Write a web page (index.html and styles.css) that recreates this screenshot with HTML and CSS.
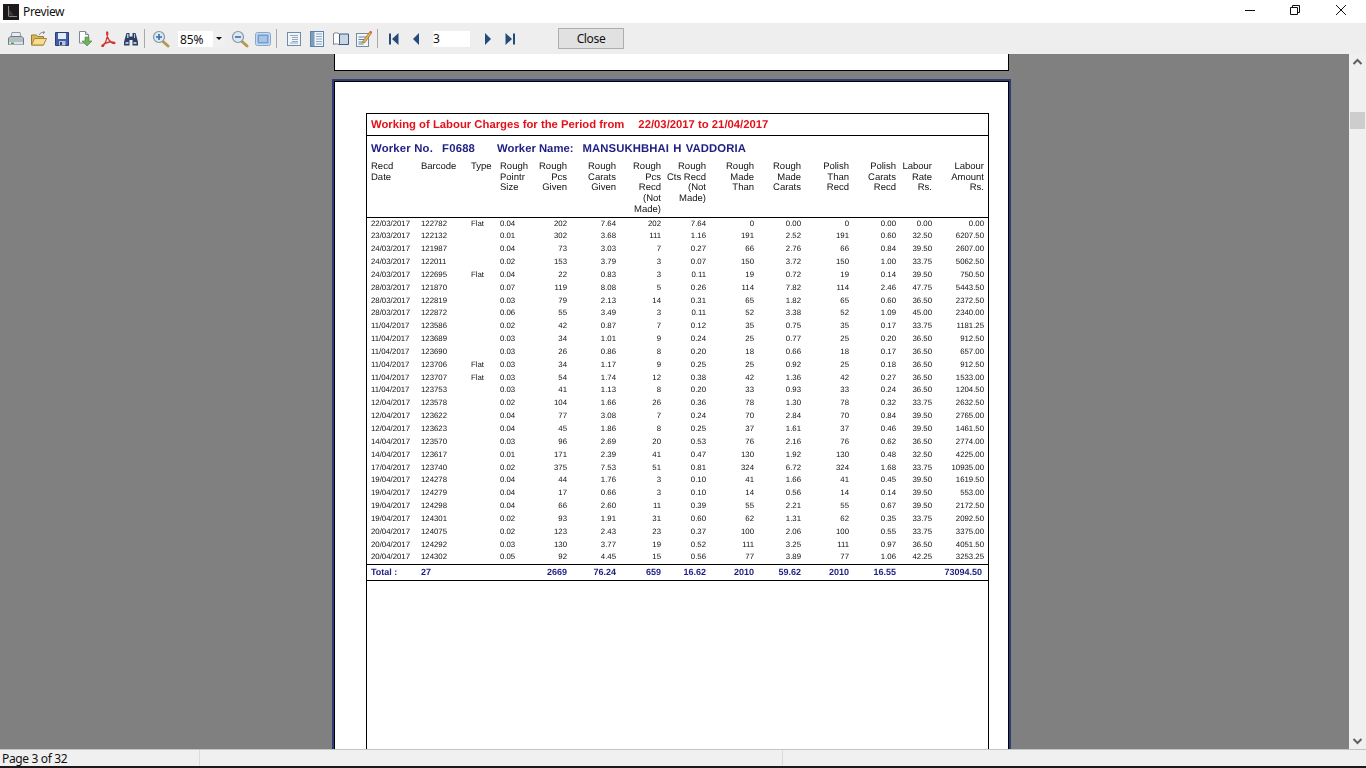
FILE: index.html
```html
<!DOCTYPE html>
<html lang="en">
<head>
    <meta charset="UTF-8">
    <title>Preview</title>
    <link rel="stylesheet" href="styles.css">
</head>
<body>
    <div class="window">
        <div class="titlebar">
            <svg class="app-icon" width="16" height="16" viewBox="0 0 16 16"><rect width="16" height="16" fill="#1c1a1a"/><path d="M5.500 2v10M5.500 12.500H14" stroke="#8f8a84" fill="none"/><path d="M6 5v6.500h5z" fill="#3d3a37"/></svg>
            <span class="title">Preview</span>
            <div class="win-btns">
                <svg class="win-btn" width="46" height="20" viewBox="0 0 46 20"><path d="M19 10.500h10" stroke="#111" fill="none"/></svg>
                <svg class="win-btn" width="46" height="20" viewBox="0 0 46 20"><path d="M18.500 7.500h7v7h-7zM20.500 7.500v-2h7v7h-2" stroke="#111" fill="none"/></svg>
                <svg class="win-btn" width="46" height="20" viewBox="0 0 46 20"><path d="M18 5l10 10M28 5L18 15" stroke="#111" fill="none"/></svg>
            </div>
        </div>

        <div class="toolbar">
            <button class="tool"><svg width="16" height="16" viewBox="0 0 16 16"><path d="M4 1.500h8l1 5H3z" fill="#e8ecf0" stroke="#8d99a4"/><path d="M.5 7l2-1.500h11l2 1.500v6.500H.5z" fill="#b5bdc5" stroke="#6f7b86"/><path d="M1 11h14v2.500H1z" fill="#dde1e5"/><path d="M3 11.500h3v1.500H3z" fill="#37b24a"/></svg></button>
            <button class="tool"><svg width="18" height="16" viewBox="0 0 18 16"><path d="M1.500 14V4h5l1 1.500h6V14z" fill="#d9b75e" stroke="#9c7a2c"/><path d="M1.500 14l3-6.500h12l-3 6.500z" fill="#f4dd8f" stroke="#a98732"/><path d="M9 4c1-2 3-3 5.500-2.500l-1-1.500M14.500 1.500L13 3" stroke="#7d8a96" fill="none"/></svg></button>
            <button class="tool"><svg width="16" height="16" viewBox="0 0 16 16"><path d="M1.500 1.500h13v13h-13z" fill="#3f5fa8" stroke="#2a3f78"/><path d="M4 2h8v6H4z" fill="#e6ecf5"/><path d="M5 10h6.500v4.500H5z" fill="#bcc4d2"/><path d="M6 11h2v3H6z" fill="#2a3f78"/></svg></button>
            <button class="tool"><svg width="16" height="17" viewBox="0 0 16 17"><path d="M2.500 1.500h6l3 3V13h-9z" fill="#fff" stroke="#7d8a96"/><path d="M8.500 1.500v3h3" fill="#dfe5ea" stroke="#7d8a96"/><path d="M8 7h4v4h3l-5 5-5-5h3z" fill="#6fb05c" stroke="#3f8a34" stroke-width=".6"/></svg></button>
            <button class="tool"><svg width="16" height="16" viewBox="0 0 16 16"><path d="M7 1c-1 1 .5 5 2 8 1.500 2 4 3.500 5.500 3.500 1.500-.5-.5-2-5-1.500-3 .500-6 2-7.500 3.500-.5 1 .5 1.500 1.500.5C5 12.500 7.500 6 7.800 2.500 7.800 1.500 7.500 1 7 1z" fill="none" stroke="#d3322c" stroke-width="1.300"/></svg></button>
            <button class="tool"><svg width="16" height="16" viewBox="0 0 16 16"><path d="M3.500 2h3v3.500h3V2h3l2.500 9v3.500h-5.500V9h-3v5.500H1V11z" fill="#2d3f66"/><path d="M2.500 11h3v2h-3zM10.500 11h3v2h-3zM4 3h1.500v4H4zM11 3h1v4h-1z" fill="#b4c6de"/></svg></button>
            <span class="sep sep-a"></span>
            <button class="tool zoom-in"><svg width="18" height="18" viewBox="0 0 18 18"><path d="M10.500 11l5.500 5" stroke="#b39a52" stroke-width="3" stroke-linecap="round"/><circle cx="7" cy="7" r="5.500" fill="#dbe8f3" stroke="#8395a5" stroke-width="1.200"/><path d="M4 7h6M7 4v6" stroke="#3b6ea5" stroke-width="1.600"/></svg></button>
            <div class="combo"><span class="combo-text">85%</span><span class="combo-arrow"></span></div>
            <button class="tool zoom-out"><svg width="18" height="18" viewBox="0 0 18 18"><path d="M10.500 11l5.500 5" stroke="#b39a52" stroke-width="3" stroke-linecap="round"/><circle cx="7" cy="7" r="5.500" fill="#dbe8f3" stroke="#8395a5" stroke-width="1.200"/><path d="M4 7h6" stroke="#3b6ea5" stroke-width="1.600"/></svg></button>
            <button class="tool"><svg width="16" height="14" viewBox="0 0 16 14"><rect x=".5" y=".5" width="15" height="13" rx="2" fill="#c9dbee" stroke="#8aa6c6"/><rect x="2.500" y="2.500" width="11" height="9" fill="#6e9ed2"/><path d="M4 5h8M4 7h8M4 9h8" stroke="#dfeaf6"/></svg></button>
            <span class="sep sep-b"></span>
            <button class="tool page-tool"><svg width="14" height="14" viewBox="0 0 14 14"><rect x=".5" y=".5" width="13" height="13" fill="#f1f4f8" stroke="#6f8dab"/><path d="M3 3.500h8M5 5.500h6M5 7.500h6M5 9.500h6M3 11h8" stroke="#93a9c0"/></svg></button>
            <button class="tool"><svg width="14" height="16" viewBox="0 0 14 16"><rect x=".5" y=".5" width="13" height="15" fill="#f1f4f8" stroke="#5d82ab"/><path d="M1 4.500h3M1 8h3M1 11.500h3" stroke="#5d82ab"/><path d="M1 1h3.500v14H1z" fill="#7d9cbe"/><path d="M6 3h6M6 5.500h6M6 8h6M6 10.500h6M6 13h6" stroke="#8ba8c7"/></svg></button>
            <button class="tool book-tool"><svg width="16" height="14" viewBox="0 0 16 14"><path d="M.5 1.500c2-1 4-1 6 .5v11c-2-1.500-4-1.500-6-.5z" fill="#fff" stroke="#7a8894"/><path d="M6.500 2h9v10.500h-9z" fill="#c8d6e6" stroke="#3d5a80"/></svg></button>
            <button class="tool"><svg width="16" height="17" viewBox="0 0 16 17"><rect x=".5" y="3.500" width="12" height="13" fill="#f3f6f9" stroke="#7d8a96"/><path d="M2.500 7h8M2.500 9.500h6M2.500 12h5M2.500 14h5" stroke="#5a83ad"/><path d="M7 11l7-9.500 1.800 1.300L9 12.500 6.800 13z" fill="#e9b44c" stroke="#9c6b2a" stroke-width=".7"/><path d="M13.500 2.200l1-1.500 1.500 1.100-1 1.500z" fill="#d9534f"/></svg></button>
            <span class="sep sep-c"></span>
            <button class="tool nav first"><svg width="12" height="12" viewBox="0 0 12 12"><path d="M1 .5h2v11H1zM10.500 0v12L4 6z" fill="#254a7c"/></svg></button>
            <button class="tool nav"><svg width="8" height="12" viewBox="0 0 8 12"><path d="M7 0v12L1 6z" fill="#254a7c"/></svg></button>
            <input class="page-input" type="text" value="3">
            <button class="tool nav next"><svg width="8" height="12" viewBox="0 0 8 12"><path d="M1 0v12l6-6z" fill="#254a7c"/></svg></button>
            <button class="tool nav"><svg width="12" height="12" viewBox="0 0 12 12"><path d="M1.500 0v12L8 6zM9 .5h2v11H9z" fill="#254a7c"/></svg></button>
            <button class="close-btn">Close</button>
        </div>

        <div class="viewer">
            <div class="canvas">
                <div class="sheet-prev"></div>
                <div class="sheet">
                    <div class="report">
                        <div class="report-title"><span class="title-from">Working of Labour Charges for the Period from</span><span class="title-dates">22/03/2017 to 21/04/2017</span></div>
                        <div class="worker">
                            <span class="worker-no">Worker No.</span><span class="worker-code">F0688</span><span class="worker-label">Worker Name:</span><span class="worker-name">MANSUKHBHAI H VADDORIA</span>
                        </div>
                        <table class="labour">
                            <colgroup>
                                <col class="c-date"><col class="c-code"><col class="c-type"><col class="c-size"><col class="c-pcs"><col class="c-carats"><col class="c-rpcs"><col class="c-rcts"><col class="c-mthan"><col class="c-mcarats"><col class="c-pthan"><col class="c-pcarats"><col class="c-rate"><col class="c-amount">
                            </colgroup>
                            <thead>
                                <tr>
                                    <th class="left">Recd<br>Date</th>
                                    <th class="left">Barcode</th>
                                    <th class="left">Type</th>
                                    <th class="left">Rough<br>Pointr<br>Size</th>
                                    <th>Rough<br>Pcs<br>Given</th>
                                    <th>Rough<br>Carats<br>Given</th>
                                    <th>Rough<br>Pcs<br>Recd<br>(Not<br>Made)</th>
                                    <th>Rough<br>Cts Recd<br>(Not<br>Made)</th>
                                    <th>Rough<br>Made<br>Than</th>
                                    <th>Rough<br>Made<br>Carats</th>
                                    <th>Polish<br>Than<br>Recd</th>
                                    <th>Polish<br>Carats<br>Recd</th>
                                    <th>Labour<br>Rate<br>Rs.</th>
                                    <th>Labour<br>Amount<br>Rs.</th>
                                </tr>
                            </thead>
                            <tbody>
                                <tr><td class="left">22/03/2017</td><td class="left">122782</td><td class="left">Flat</td><td class="left">0.04</td><td>202</td><td>7.64</td><td>202</td><td>7.64</td><td>0</td><td>0.00</td><td>0</td><td>0.00</td><td>0.00</td><td>0.00</td></tr>
                                <tr><td class="left">23/03/2017</td><td class="left">122132</td><td class="left"></td><td class="left">0.01</td><td>302</td><td>3.68</td><td>111</td><td>1.16</td><td>191</td><td>2.52</td><td>191</td><td>0.60</td><td>32.50</td><td>6207.50</td></tr>
                                <tr><td class="left">24/03/2017</td><td class="left">121987</td><td class="left"></td><td class="left">0.04</td><td>73</td><td>3.03</td><td>7</td><td>0.27</td><td>66</td><td>2.76</td><td>66</td><td>0.84</td><td>39.50</td><td>2607.00</td></tr>
                                <tr><td class="left">24/03/2017</td><td class="left">122011</td><td class="left"></td><td class="left">0.02</td><td>153</td><td>3.79</td><td>3</td><td>0.07</td><td>150</td><td>3.72</td><td>150</td><td>1.00</td><td>33.75</td><td>5062.50</td></tr>
                                <tr><td class="left">24/03/2017</td><td class="left">122695</td><td class="left">Flat</td><td class="left">0.04</td><td>22</td><td>0.83</td><td>3</td><td>0.11</td><td>19</td><td>0.72</td><td>19</td><td>0.14</td><td>39.50</td><td>750.50</td></tr>
                                <tr><td class="left">28/03/2017</td><td class="left">121870</td><td class="left"></td><td class="left">0.07</td><td>119</td><td>8.08</td><td>5</td><td>0.26</td><td>114</td><td>7.82</td><td>114</td><td>2.46</td><td>47.75</td><td>5443.50</td></tr>
                                <tr><td class="left">28/03/2017</td><td class="left">122819</td><td class="left"></td><td class="left">0.03</td><td>79</td><td>2.13</td><td>14</td><td>0.31</td><td>65</td><td>1.82</td><td>65</td><td>0.60</td><td>36.50</td><td>2372.50</td></tr>
                                <tr><td class="left">28/03/2017</td><td class="left">122872</td><td class="left"></td><td class="left">0.06</td><td>55</td><td>3.49</td><td>3</td><td>0.11</td><td>52</td><td>3.38</td><td>52</td><td>1.09</td><td>45.00</td><td>2340.00</td></tr>
                                <tr><td class="left">11/04/2017</td><td class="left">123586</td><td class="left"></td><td class="left">0.02</td><td>42</td><td>0.87</td><td>7</td><td>0.12</td><td>35</td><td>0.75</td><td>35</td><td>0.17</td><td>33.75</td><td>1181.25</td></tr>
                                <tr><td class="left">11/04/2017</td><td class="left">123689</td><td class="left"></td><td class="left">0.03</td><td>34</td><td>1.01</td><td>9</td><td>0.24</td><td>25</td><td>0.77</td><td>25</td><td>0.20</td><td>36.50</td><td>912.50</td></tr>
                                <tr><td class="left">11/04/2017</td><td class="left">123690</td><td class="left"></td><td class="left">0.03</td><td>26</td><td>0.86</td><td>8</td><td>0.20</td><td>18</td><td>0.66</td><td>18</td><td>0.17</td><td>36.50</td><td>657.00</td></tr>
                                <tr><td class="left">11/04/2017</td><td class="left">123706</td><td class="left">Flat</td><td class="left">0.03</td><td>34</td><td>1.17</td><td>9</td><td>0.25</td><td>25</td><td>0.92</td><td>25</td><td>0.18</td><td>36.50</td><td>912.50</td></tr>
                                <tr><td class="left">11/04/2017</td><td class="left">123707</td><td class="left">Flat</td><td class="left">0.03</td><td>54</td><td>1.74</td><td>12</td><td>0.38</td><td>42</td><td>1.36</td><td>42</td><td>0.27</td><td>36.50</td><td>1533.00</td></tr>
                                <tr><td class="left">11/04/2017</td><td class="left">123753</td><td class="left"></td><td class="left">0.03</td><td>41</td><td>1.13</td><td>8</td><td>0.20</td><td>33</td><td>0.93</td><td>33</td><td>0.24</td><td>36.50</td><td>1204.50</td></tr>
                                <tr><td class="left">12/04/2017</td><td class="left">123578</td><td class="left"></td><td class="left">0.02</td><td>104</td><td>1.66</td><td>26</td><td>0.36</td><td>78</td><td>1.30</td><td>78</td><td>0.32</td><td>33.75</td><td>2632.50</td></tr>
                                <tr><td class="left">12/04/2017</td><td class="left">123622</td><td class="left"></td><td class="left">0.04</td><td>77</td><td>3.08</td><td>7</td><td>0.24</td><td>70</td><td>2.84</td><td>70</td><td>0.84</td><td>39.50</td><td>2765.00</td></tr>
                                <tr><td class="left">12/04/2017</td><td class="left">123623</td><td class="left"></td><td class="left">0.04</td><td>45</td><td>1.86</td><td>8</td><td>0.25</td><td>37</td><td>1.61</td><td>37</td><td>0.46</td><td>39.50</td><td>1461.50</td></tr>
                                <tr><td class="left">14/04/2017</td><td class="left">123570</td><td class="left"></td><td class="left">0.03</td><td>96</td><td>2.69</td><td>20</td><td>0.53</td><td>76</td><td>2.16</td><td>76</td><td>0.62</td><td>36.50</td><td>2774.00</td></tr>
                                <tr><td class="left">14/04/2017</td><td class="left">123617</td><td class="left"></td><td class="left">0.01</td><td>171</td><td>2.39</td><td>41</td><td>0.47</td><td>130</td><td>1.92</td><td>130</td><td>0.48</td><td>32.50</td><td>4225.00</td></tr>
                                <tr><td class="left">17/04/2017</td><td class="left">123740</td><td class="left"></td><td class="left">0.02</td><td>375</td><td>7.53</td><td>51</td><td>0.81</td><td>324</td><td>6.72</td><td>324</td><td>1.68</td><td>33.75</td><td>10935.00</td></tr>
                                <tr><td class="left">19/04/2017</td><td class="left">124278</td><td class="left"></td><td class="left">0.04</td><td>44</td><td>1.76</td><td>3</td><td>0.10</td><td>41</td><td>1.66</td><td>41</td><td>0.45</td><td>39.50</td><td>1619.50</td></tr>
                                <tr><td class="left">19/04/2017</td><td class="left">124279</td><td class="left"></td><td class="left">0.04</td><td>17</td><td>0.66</td><td>3</td><td>0.10</td><td>14</td><td>0.56</td><td>14</td><td>0.14</td><td>39.50</td><td>553.00</td></tr>
                                <tr><td class="left">19/04/2017</td><td class="left">124298</td><td class="left"></td><td class="left">0.04</td><td>66</td><td>2.60</td><td>11</td><td>0.39</td><td>55</td><td>2.21</td><td>55</td><td>0.67</td><td>39.50</td><td>2172.50</td></tr>
                                <tr><td class="left">19/04/2017</td><td class="left">124301</td><td class="left"></td><td class="left">0.02</td><td>93</td><td>1.91</td><td>31</td><td>0.60</td><td>62</td><td>1.31</td><td>62</td><td>0.35</td><td>33.75</td><td>2092.50</td></tr>
                                <tr><td class="left">20/04/2017</td><td class="left">124075</td><td class="left"></td><td class="left">0.02</td><td>123</td><td>2.43</td><td>23</td><td>0.37</td><td>100</td><td>2.06</td><td>100</td><td>0.55</td><td>33.75</td><td>3375.00</td></tr>
                                <tr><td class="left">20/04/2017</td><td class="left">124292</td><td class="left"></td><td class="left">0.03</td><td>130</td><td>3.77</td><td>19</td><td>0.52</td><td>111</td><td>3.25</td><td>111</td><td>0.97</td><td>36.50</td><td>4051.50</td></tr>
                                <tr><td class="left">20/04/2017</td><td class="left">124302</td><td class="left"></td><td class="left">0.05</td><td>92</td><td>4.45</td><td>15</td><td>0.56</td><td>77</td><td>3.89</td><td>77</td><td>1.06</td><td>42.25</td><td>3253.25</td></tr>
                            </tbody>
                            <tfoot>
                                <tr><td class="left">Total :</td><td class="left">27</td><td></td><td></td><td>2669</td><td>76.24</td><td>659</td><td>16.62</td><td>2010</td><td>59.62</td><td>2010</td><td>16.55</td><td></td><td>73094.50</td></tr>
                            </tfoot>
                        </table>
                    </div>
                </div>
            </div>
            <div class="scrollbar">
                <svg class="arrow" width="17" height="17" viewBox="0 0 17 17"><path d="M4.500 10l4-4 4 4" stroke="#606060" stroke-width="2" fill="none"/></svg>
                <div class="track"><div class="thumb"></div></div>
                <svg class="arrow" width="17" height="17" viewBox="0 0 17 17"><path d="M4.500 7l4 4 4-4" stroke="#606060" stroke-width="2" fill="none"/></svg>
            </div>
        </div>

        <div class="statusbar">
            <div class="panel panel-page">Page 3 of 32</div>
            <div class="panel panel-mid"></div>
            <div class="panel panel-end"></div>
        </div>
        <div class="taskbar-edge"></div>
    </div>
</body>
</html>
```

FILE: styles.css
```css
* {
    box-sizing: border-box;
}
html, body {
    height: 100%;
}
body {
    margin: 0;
    overflow: hidden;
    font-family: "Noto Sans", Arial, sans-serif;
    background-color: #fff;
}
.window {
    height: 768px;
    display: flex;
    flex-direction: column;
}

/* title bar */
.titlebar {
    height: 23px;
    flex: none;
    display: flex;
    align-items: center;
    padding-left: 3px;
    background-color: #fff;
}
.title {
    margin-left: 4px;
    font-size: 12px;
    letter-spacing: -0.35px;
    color: #111;
}
.win-btns {
    margin: 0 2px 0 auto;
    align-self: flex-start;
    display: flex;
}
.win-btn {
    display: block;
}

/* toolbar */
.toolbar {
    height: 31px;
    flex: none;
    display: flex;
    align-items: center;
    padding-left: 4px;
    background-color: #eeeeee;
}
.tool {
    width: 23px;
    height: 24px;
    flex: none;
    padding: 0;
    border: 0;
    background: none;
    display: flex;
    align-items: center;
    justify-content: center;
}
.sep {
    width: 1px;
    height: 19px;
    flex: none;
    background-color: #a9a9a9;
}
.sep-a { margin-left: 2px; }
.sep-b { margin-left: 2px; }
.sep-c { margin-left: 2px; }
.zoom-in { margin-left: 4px; }
.zoom-out { margin-left: 3px; }
.page-tool { margin-left: 5px; }
.book-tool { margin-left: 1px; }
.nav { width: 22px; }
.first { margin-left: 5px; }
.next { margin-left: 7px; }
.combo {
    width: 47px;
    height: 16px;
    margin-left: 6px;
    flex: none;
    display: flex;
    background-color: #fff;
}
.combo-text {
    flex: 1;
    padding-left: 2px;
    font-size: 12px;
    line-height: 17px;
    letter-spacing: -0.1px;
    color: #111;
}
.combo-arrow {
    width: 12px;
    background-color: #f0f0f0;
    position: relative;
}
.combo-arrow::after {
    content: "";
    position: absolute;
    left: 3px;
    top: 6px;
    border: 3px solid transparent;
    border-top: 3px solid #111;
    border-bottom: 0;
}
.page-input {
    width: 37px;
    height: 16px;
    margin-left: 6px;
    flex: none;
    padding: 0;
    border: 0;
    outline: 0;
    font-family: "Noto Sans", Arial, sans-serif;
    font-size: 12px;
    color: #111;
    background-color: #fff;
}
.close-btn {
    width: 66px;
    height: 21px;
    margin-left: 37px;
    flex: none;
    padding: 0;
    border: 1px solid #adadad;
    background-color: #e1e1e1;
    font-family: "Noto Sans", Arial, sans-serif;
    font-size: 12px;
    letter-spacing: -0.35px;
    color: #111;
}

/* report canvas */
.viewer {
    flex: 1;
    min-height: 0;
    display: flex;
}
.canvas {
    flex: 1;
    overflow: hidden;
    background-color: #808080;
}
.sheet-prev {
    width: 675px;
    height: 17px;
    margin-left: 334px;
    border: 1px solid #000;
    border-top: 0;
    background-color: #fff;
}
.sheet {
    width: 679px;
    margin: 8px 0 0 332px;
    padding: 32px 0 0 32px;
    border: 2px solid #2a3f78;
    outline: 1px solid #000;
    outline-offset: -3px;
    background-color: #fff;
}
.report {
    width: 623px;
    height: 900px;
    border: 1px solid #000;
    font-family: "Liberation Sans", Arial, sans-serif;
    text-rendering: geometricPrecision;
    will-change: transform;
}
.report-title {
    height: 22px;
    padding-left: 4px;
    border-bottom: 1px solid #000;
    font-size: 11.3px;
    font-weight: bold;
    line-height: 22px;
    color: #e3101a;
    white-space: nowrap;
}
.title-dates {
    margin-left: 14px;
}
.worker {
    height: 25px;
    padding: 1px 0 0 4px;
    font-size: 11.3px;
    font-weight: bold;
    line-height: 24px;
    color: #1e1e85;
    white-space: nowrap;
}
.worker-no,
.worker-code {
    letter-spacing: 0.2px;
}
.worker-code { margin-left: 9px; }
.worker-label { margin-left: 22px; }
.worker-name {
    margin-left: 9px;
    letter-spacing: 0.1px;
    word-spacing: 1px;
}

/* labour table */
.labour {
    width: 621px;
    table-layout: fixed;
    border-collapse: collapse;
}
.c-date { width: 54px; }
.c-code { width: 50px; }
.c-type { width: 29px; }
.c-size { width: 30px; }
.c-pcs { width: 37px; }
.c-carats { width: 49px; }
.c-rpcs { width: 45px; }
.c-rcts { width: 45px; }
.c-mthan { width: 48px; }
.c-mcarats { width: 47px; }
.c-pthan { width: 48px; }
.c-pcarats { width: 47px; }
.c-rate { width: 36px; }
.c-amount { width: 56px; }
.labour th,
.labour td {
    padding: 0;
    text-align: right;
    white-space: nowrap;
}
.labour th.left,
.labour td.left {
    text-align: left;
}
.labour th:first-child,
.labour td:first-child {
    padding-left: 4px;
}
.labour th:last-child,
.labour td:last-child {
    padding-right: 4px;
}
.labour th {
    height: 56px;
    padding-top: 1px;
    vertical-align: top;
    font-size: 9.5px;
    font-weight: normal;
    line-height: 10.7px;
    color: #111;
}
.labour thead tr {
    border-bottom: 1px solid #000;
}
.labour tbody td {
    height: 12.85px;
    line-height: 12.85px;
    font-size: 7.8px;
    color: #111;
}
.labour tfoot tr {
    border-top: 1px solid #000;
    border-bottom: 1px solid #000;
}
.labour tfoot td {
    height: 16px;
    padding-bottom: 1px;
    font-size: 9px;
    font-weight: bold;
    color: #1e1e85;
}
.labour tfoot td:last-child {
    padding-right: 6px;
}

/* scrollbar */
.scrollbar {
    width: 17px;
    flex: none;
    display: flex;
    flex-direction: column;
    background-color: #f0f0f0;
}
.arrow {
    display: block;
    flex: none;
}
.track {
    flex: 1;
    padding: 41px 1px 0;
}
.thumb {
    height: 17px;
    background-color: #cdcdcd;
}

/* status bar */
.statusbar {
    height: 17px;
    flex: none;
    display: flex;
    border-top: 1px solid #c4c4c4;
    background-color: #f0f0f0;
    font-size: 12px;
    line-height: 14px;
    color: #111;
}
.panel-page {
    width: 200px;
    padding: 2px 0 0 2px;
    border-right: 1px solid #dcdcdc;
    letter-spacing: -0.35px;
    white-space: nowrap;
}
.panel-mid {
    width: 583px;
    border-right: 1px solid #dcdcdc;
}
.panel-end {
    flex: 1;
}
.taskbar-edge {
    height: 2px;
    flex: none;
    background-color: #1a1a1a;
}
```
